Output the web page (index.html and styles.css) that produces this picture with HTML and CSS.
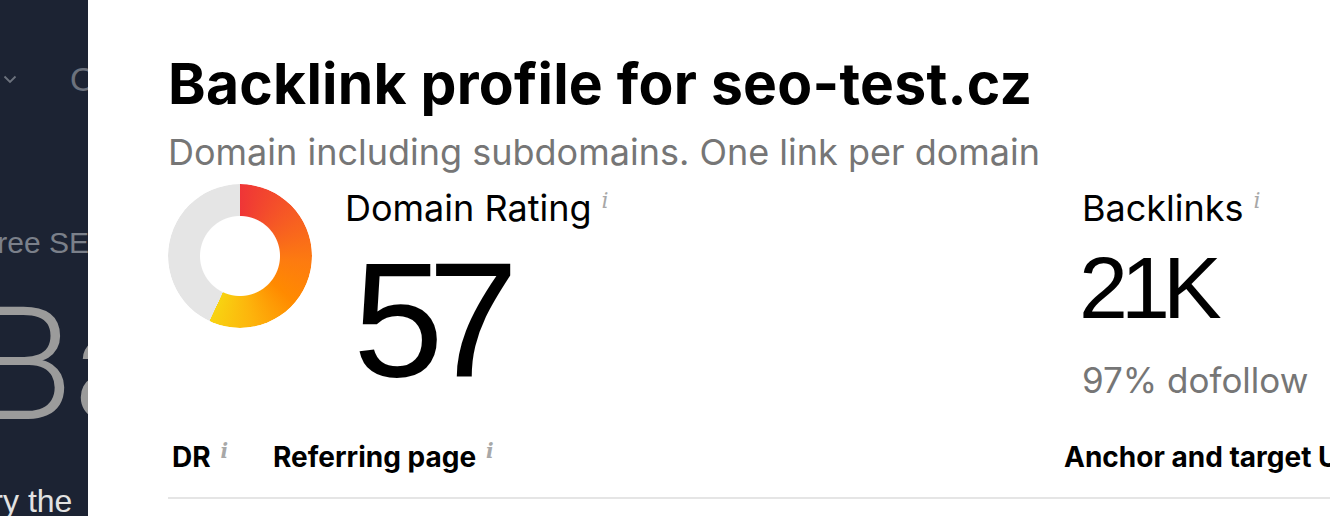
FILE: index.html
```html
<!DOCTYPE html>
<html lang="en">
<head>
<meta charset="utf-8">
<title>Backlink profile</title>
<link rel="stylesheet" href="styles.css">
</head>
<body>
<div class="page">
  <aside class="behind">
    <div class="nav-row"><span class="chev"><svg width="14" height="9" viewBox="0 0 14 9"><path d="M1.5 1.5 L7 7 L12.5 1.5" fill="none" stroke="#6c727d" stroke-width="1.8"/></svg></span><span class="nav-o">O</span></div>
    <div class="kicker">Free SEO</div>
    <div class="hero">Ba</div>
    <div class="lead">Try the</div>
  </aside>
  <main class="modal">
    <h1 class="title">Backlink profile for seo-test.cz</h1>
    <p class="subtitle">Domain including subdomains. One link per domain</p>
    <section class="stats">
      <div class="donut"></div>
      <div class="stat stat-dr">
        <div class="label">Domain Rating<span class="info">i</span></div>
        <div class="big">57</div>
      </div>
      <div class="stat stat-bl">
        <div class="label">Backlinks<span class="info">i</span></div>
        <div class="mid">21K</div>
        <div class="note">97% dofollow</div>
      </div>
    </section>
    <div class="thead">
      <div class="th th-dr">DR<span class="info">i</span></div>
      <div class="th th-ref">Referring page<span class="info">i</span></div>
      <div class="th th-anchor">Anchor and target URL</div>
    </div>
  </main>
</div>
</body>
</html>
```

FILE: styles.css
```css
* { box-sizing: border-box; }
html, body {
  margin: 0;
  padding: 0;
  width: 1330px;
  height: 516px;
  overflow: hidden;
  background: #fff;
}
body {
  font-family: Inter, "Liberation Sans", sans-serif;
  color: #000;
}
.page {
  display: flex;
  height: 516px;
}
.behind {
  width: 88px;
  flex: none;
  background: #1c2333;
  overflow: hidden;
  white-space: nowrap;
  font-family: "Liberation Sans", Arial, sans-serif;
}
.nav-row {
  display: flex;
  align-items: center;
  height: 30px;
  margin-top: 64px;
}
.chev {
  display: flex;
  margin-left: 3px;
}
.nav-o {
  margin-left: 53px;
  font-size: 34px;
  color: #6c727d;
}
.kicker {
  margin-top: 132px;
  margin-left: -21px;
  font-size: 30px;
  line-height: 34px;
  color: #7b808a;
}
.hero {
  margin-top: 35px;
  margin-left: -24px;
  font-family: Roboto, "Liberation Sans", sans-serif;
  font-weight: 300;
  font-size: 158px;
  line-height: 140px;
  letter-spacing: 0;
  color: #9b9b9b;
}
.lead {
  margin-top: 48px;
  margin-left: -26px;
  font-size: 32px;
  color: #e2e2e2;
}
.modal {
  flex: none;
  width: 1400px;
  padding-left: 80px;
  padding-top: 52px;
}
.title {
  margin: 0;
  font-size: 57px;
  line-height: 64px;
  font-weight: 700;
  letter-spacing: 0.25px;
}
.subtitle {
  margin: 14px 0 0 0;
  font-size: 36px;
  line-height: 44px;
  color: #767676;
}
.stats {
  display: flex;
  margin-top: 10px;
  height: 217px;
}
.donut {
  width: 144px;
  height: 144px;
  flex: none;
  border-radius: 50%;
  background: conic-gradient(#ef3537 0deg, #f65a24 50deg, #fd7b10 95deg, #ff8a00 130deg, #fdb40c 170deg, #f8d311 205deg, #e5e5e5 205.3deg, #e5e5e5 360deg);
  -webkit-mask: radial-gradient(circle, transparent 39.5px, #000 40.5px);
  mask: radial-gradient(circle, transparent 39.5px, #000 40.5px);
}
.stat-dr {
  margin-left: 33px;
  width: 737px;
}
.label {
  font-size: 36px;
  line-height: 40px;
  margin-top: 4px;
  white-space: nowrap;
}
.info {
  font-family: "DejaVu Serif", serif;
  font-style: italic;
  font-size: 22px;
  line-height: 22px;
  color: #a8a8a8;
  vertical-align: top;
  margin-left: 10px;
  position: relative;
  top: 2px;
}
.big {
  font-family: "Liberation Sans", Arial, sans-serif;
  font-size: 163px;
  line-height: 160px;
  margin-top: 12px;
  margin-left: 8px;
  letter-spacing: -16px;
}
.mid {
  font-family: "Liberation Sans", Arial, sans-serif;
  font-size: 88px;
  line-height: 100px;
  margin-top: 10px;
  margin-left: -3px;
  letter-spacing: -7px;
}
.note {
  font-size: 35px;
  line-height: 40px;
  color: #767676;
  margin-top: 22px;
  white-space: nowrap;
}
.thead {
  display: grid;
  grid-template-columns: 101px 791px 1fr;
  margin-top: 16px;
  border-bottom: 2px solid #e5e5e5;
  height: 82px;
  align-items: center;
}
.th {
  font-size: 28px;
  line-height: 34px;
  font-weight: 700;
  padding-left: 4px;
  white-space: nowrap;
}
.th .info {
  font-size: 20px;
  top: 0;
}
```
